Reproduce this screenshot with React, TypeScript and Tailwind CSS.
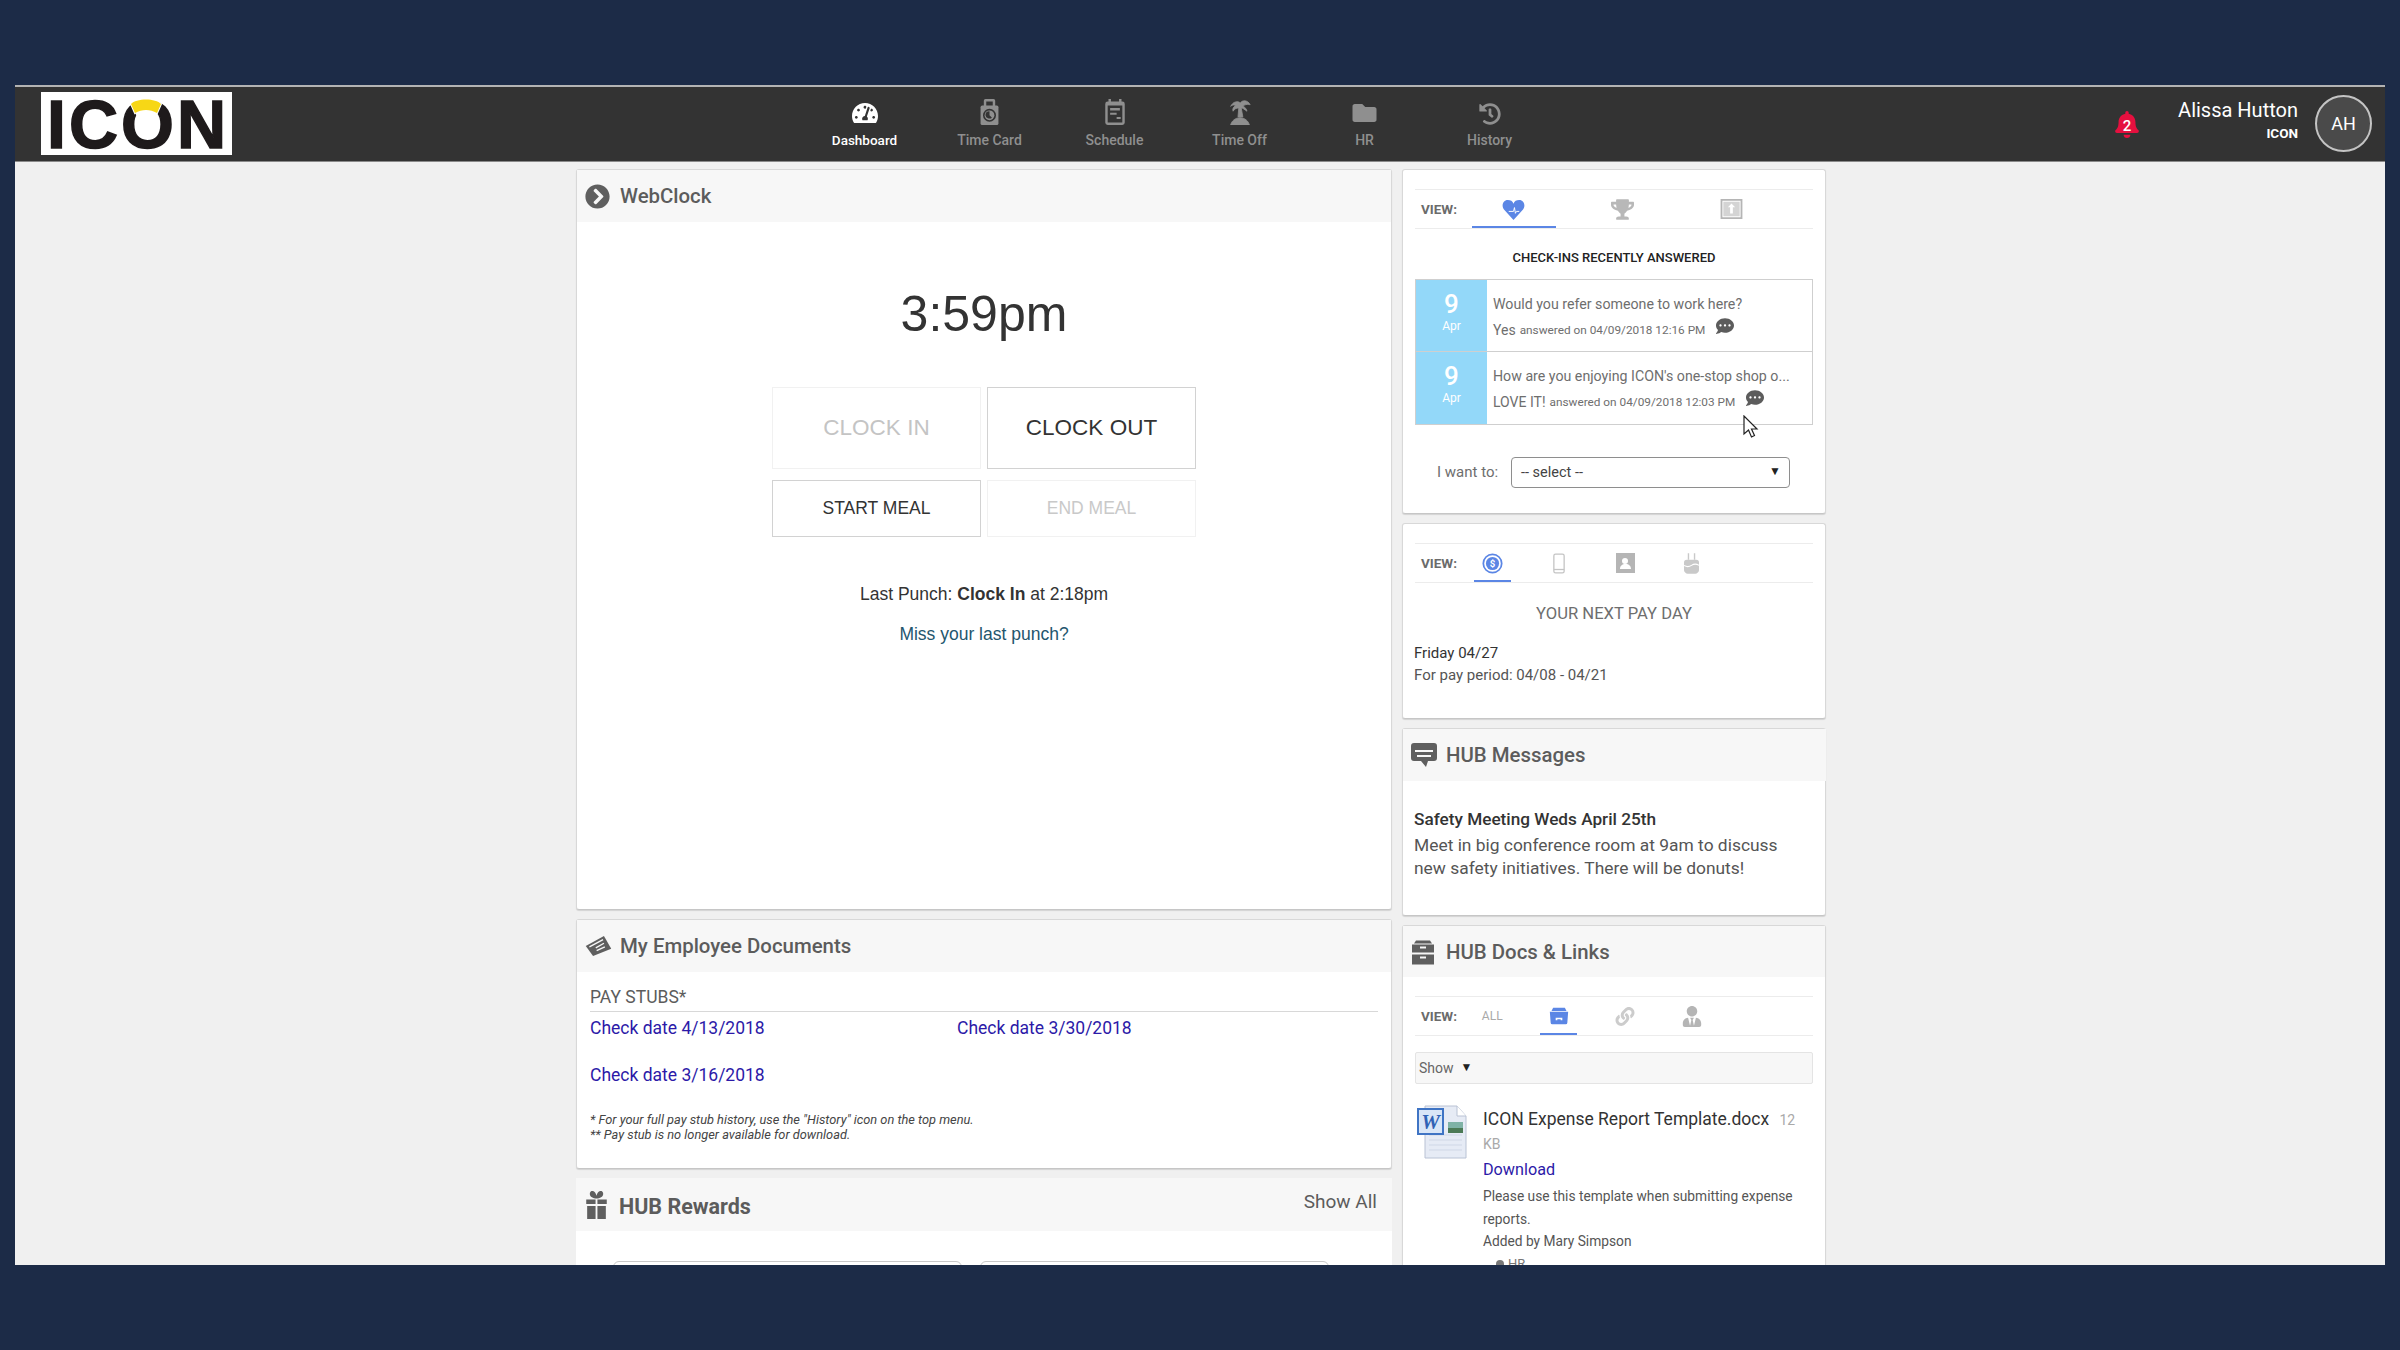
import React from "react";
import {
  FaBell,
  FaChevronCircleRight,
  FaCommentDots,
  FaFolder,
  FaHistory,
  FaLink,
  FaTachometerAlt,
  FaTrophy,
  FaUserTie,
} from "react-icons/fa";

const NavClock = () => (
  <svg viewBox="0 0 24 32" className="h-[26px] w-[21px]" fill="currentColor">
    <path d="M7 0h10a2 2 0 0 1 2 2v7h-3V3H8v6H5V2a2 2 0 0 1 2-2z" />
    <path d="M3 8h18a2 2 0 0 1 2 2v20a2 2 0 0 1-2 2H3a2 2 0 0 1-2-2V10a2 2 0 0 1 2-2z" />
    <circle cx="12" cy="20" r="8" fill="#333333" />
    <circle cx="12" cy="20" r="6" fill="#8f8f8f" />
    <path d="M12 15v5l3 3a5 5 0 0 1-8-3 5 5 0 0 1 5-5z" fill="#333333" />
  </svg>
);

const NavCalendar = () => (
  <svg viewBox="0 0 24 32" className="h-[26px] w-[22px]" fill="currentColor">
    <path fillRule="evenodd" d="M4 0h3v3h10V0h3v3h1a3 3 0 0 1 3 3v23a3 3 0 0 1-3 3H3a3 3 0 0 1-3-3V6a3 3 0 0 1 3-3h1zM3 8v21h18V8zm3 3h12v3H6zm0 6h8v2.500H6zm8 5h5v2.500h-5z" />
  </svg>
);

const NavPalm = () => (
  <svg viewBox="0 0 27 32" className="h-[26px] w-[24px]" fill="currentColor" stroke="currentColor" strokeWidth="1">
    <path d="M2 9C5 3 11 2 14 5c2-4 9-4 12 2-4-1-7 0-9 2 3 1 5 4 5 6-3-2-5-4-7-4l2 11h-6l1-11c-3 0-5 1-7 4-1-2 0-5 3-7-2-1-4-1-6 1z" />
    <path d="M2 32c1-5 6-9 11.500-9S24 27 25 32z" />
  </svg>
);

const DollarCircle = () => (
  <svg viewBox="0 0 24 24" className="h-[21px] w-[21px]">
    <circle cx="12" cy="12" r="10.500" fill="none" stroke="#5b86e5" strokeWidth="2" />
    <circle cx="12" cy="12" r="7.500" fill="#5b86e5" />
    <text x="12" y="16" textAnchor="middle" fontSize="11" fontWeight="700" fill="#fff" fontFamily="Roboto, sans-serif">
      $
    </text>
  </svg>
);

const HeartPulse = () => (
  <svg viewBox="0 0 24 22" className="h-[21px] w-[23px]">
    <path d="M12 22 2 11C-1 7 1 1 6 1c3 0 5 1 6 4 1-3 3-4 6-4 5 0 7 6 4 10z" fill="#5b86e5" />
    <path d="M7 13h5l1-4 1 6 1-2h3" fill="none" stroke="#fff" strokeWidth="1" />
  </svg>
);

const UploadBox = () => (
  <svg viewBox="0 0 24 22" className="h-[20px] w-[23px]">
    <path fillRule="evenodd" d="M0 0h24v22H0zm2 2v18h20V2z" fill="#b5b5b5" />
    <path d="M3 3h18v16H3z" fill="#d4d4d4" />
    <path d="M12 5l4 4h-2.500v7h-3V9H8z" fill="#fff" />
  </svg>
);

const Phone = () => (
  <svg viewBox="0 0 14 24" className="h-[21px] w-[12px]" fill="none" stroke="#c4c4c4" strokeWidth="1.500">
    <rect x="1" y="1" width="12" height="22" rx="2" />
    <path d="M1 19h12" />
  </svg>
);

const Contact = () => (
  <svg viewBox="0 0 20 20" className="h-[20px] w-[20px]">
    <path fillRule="evenodd" d="M1 0h19v20H1zm9 5a3 3 0 1 0 0 6 3 3 0 0 0 0-6zm-5 11h11c0-3-2-5-5.500-5S5 13 5 16z" fill="#b5b5b5" />
  </svg>
);

const Cake = () => (
  <svg viewBox="0 0 16 22" className="h-[21px] w-[15px]" fill="#c9c9c9">
    <path d="M4 0h1.500v7H4zM10.500 0H12v7h-1.500z" />
    <path d="M3 7h10a3 3 0 0 1 3 3v8c0 2-2 4-4 4H4c-2 0-4-2-4-4v-8a3 3 0 0 1 3-3z" />
    <path d="M0 13c3 2 5 2 8 0s5-2 8 0" fill="none" stroke="#fff" strokeWidth="1.200" />
  </svg>
);

const GiftIcon = () => (
  <svg viewBox="0 0 22 30" className="ml-[2px] h-[28px] w-[21px]" fill="#5f5f5f">
    <path d="M11 8C7 8 3 6 4 2s6-2 7 3c1-5 6-7 7-3s-3 6-7 6z" />
    <path d="M0 9h10v5H0zM12 9h10v5H12zM1 16h9v14H1zM12 16h9v14h-9z" />
  </svg>
);

const Drawer = ({ color, className }: { color: string; className: string }) => (
  <svg viewBox="0 0 24 24" className={className} fill={color}>
    <path d="M5 0h14l2 3H3z" />
    <path fillRule="evenodd" d="M1 4h22v8H1zm8 2v2h6V6zM1 14h22v10H1zm8 2v2h6v-2z" />
  </svg>
);

const TabFolder = () => (
  <svg viewBox="0 0 24 20" className="h-[18px] w-[20px]" fill="#5b86e5">
    <path d="M5 0h14l2 4H3z" />
    <path fillRule="evenodd" d="M1 5h22l-1 13a2 2 0 0 1-2 2H4a2 2 0 0 1-2-2zm7 7v3h2v-1h4v1h2v-3z" />
  </svg>
);

const MessageIcon = () => (
  <svg viewBox="0 0 26 24" className="h-[24px] w-[26px]">
    <path d="M3 0h20a3 3 0 0 1 3 3v12a3 3 0 0 1-3 3H17l-2 6-5-6H3a3 3 0 0 1-3-3V3a3 3 0 0 1 3-3z" fill="#5f5f5f" />
    <path d="M4 7h18v2H4zM6 12h14v2H6z" fill="#f7f7f7" />
  </svg>
);

const CheckIcon = () => (
  <svg viewBox="0 0 28 22" className="h-[20px] w-[27px]">
    <path d="M0 11 20 0l8 14-20 8z" fill="#5f5f5f" />
    <path d="M4 12 19 4M11 13l9-5M12 16l9-4" stroke="#f7f7f7" strokeWidth="1.500" />
  </svg>
);

const WordFile = () => (
  <svg viewBox="0 0 50 54" className="h-[54px] w-[50px]">
    <path d="M8 1h32l9 10v42H8z" fill="#e6ebf5" stroke="#b9c2d4" />
    <path d="M40 1v10h9" fill="#fff" stroke="#b9c2d4" />
    <path d="M12 30h33M12 35h33M12 40h33M12 45h33" stroke="#cfd7e6" />
    <rect x="1" y="4" width="25" height="25" fill="#d9e6f7" stroke="#3f74c4" strokeWidth="2" />
    <text x="13.500" y="24" textAnchor="middle" fontFamily="'Liberation Serif', serif" fontWeight="700" fontStyle="italic" fontSize="21" fill="#2f62b5">
      W
    </text>
    <rect x="31" y="17" width="15" height="11" fill="#7fb2a6" />
    <rect x="31" y="23" width="15" height="5" fill="#4c7a56" />
  </svg>
);

const Cursor = () => (
  <svg viewBox="0 0 16 24" className="absolute left-[327px] top-[135px] h-[24px] w-[16px]">
    <path d="M1 1v18l4.500-4 3 7 3-1.500-3-6.500H14z" fill="#fff" stroke="#222" strokeWidth="1.200" />
  </svg>
);

// cap and notch that sit over the O of the logo
const LogoCap = () => (
  <svg viewBox="0 0 40 26" className="absolute left-[85px] top-[4px] h-[26px] w-[40px]">
    <path d="M8 15h24l-6 11H14z" fill="#fff" />
    <path
      d="M5 8C10 2 30 2 35 8l-4 9c-7-4-15-4-22 0z"
      fill="#f7d716"
      stroke="#fff"
      strokeWidth="2"
      paintOrder="stroke"
    />
  </svg>
);

const navItems = [
  { label: "Dashboard", icon: <FaTachometerAlt className="h-[24px] w-[26px]" />, active: true },
  { label: "Time Card", icon: <NavClock /> },
  { label: "Schedule", icon: <NavCalendar /> },
  { label: "Time Off", icon: <NavPalm /> },
  { label: "HR", icon: <FaFolder className="h-[24px] w-[25px]" /> },
  { label: "History", icon: <FaHistory className="h-[22px] w-[24px]" /> },
];

const Card = ({ className = "", children }: { className?: string; children: React.ReactNode }) => (
  <div className={`rounded-[3px] border border-[#d8d8d8] border-b-[#c6c6c6] bg-white shadow-[0_1px_1px_rgba(0,0,0,0.12)] ${className}`}>
    {children}
  </div>
);

const CardHead = ({
  icon,
  title,
  className = "h-[52px]",
  titleClass = "text-[20.400px] font-medium",
  right,
}: {
  icon: React.ReactNode;
  title: string;
  className?: string;
  titleClass?: string;
  right?: React.ReactNode;
}) => (
  <div className={`flex items-center bg-[#f7f7f7] pl-[8px] text-[#5c5c5c] ${className}`}>
    <div className="flex w-[35px] justify-start">{icon}</div>
    <h2 className={titleClass}>{title}</h2>
    {right}
  </div>
);

const ViewTabs = ({
  cell,
  underline,
  active,
  tabs,
}: {
  cell: string;
  underline: string;
  active: number;
  tabs: React.ReactNode[];
}) => (
  <div className="flex h-[40px] border-y border-[#ececec]">
    <div className="w-[44px] pl-[6px] text-[13.500px] font-bold leading-[38px] text-[#6b6b6b]">VIEW:</div>
    {tabs.map((tab, i) => (
      <div key={i} className={`relative flex items-center justify-center ${cell}`}>
        {tab}
        {i === active && <div className={`absolute bottom-[0px] h-[2px] bg-[#5b86e5] ${underline}`} />}
      </div>
    ))}
  </div>
);

const CheckIn = ({ question, answer, when, bordered }: { question: string; answer: string; when: string; bordered?: boolean }) => (
  <div className={`flex h-[72px] ${bordered ? "border-b border-[#cfcfcf]" : ""}`}>
    <div className="flex w-[71px] flex-col items-center bg-[#93d8f9] pt-[10px] text-white">
      <div className="text-[26px] font-medium leading-[28px]">9</div>
      <div className="text-[12px] leading-[16px]">Apr</div>
    </div>
    <div className="pl-[6px] pt-[15px] text-[#6e6e6e]">
      <div className="whitespace-nowrap text-[14.200px] leading-[18px]">{question}</div>
      <div className="mt-[8px] flex items-center text-[14px] leading-[18px]">
        {answer}
        <span className="ml-[4px] text-[11.800px]">answered on {when}</span>
        <FaCommentDots className="ml-[10px] -mt-[8px] h-[18px] w-[20px] text-[#5c5c5c]" />
      </div>
    </div>
  </div>
);

export default function App() {
  return (
    <div className="h-[1350px] overflow-hidden bg-[#1c2b47] px-[15px] pt-[85px] font-['Roboto',sans-serif]">
      <div className="flex h-[1180px] flex-col overflow-hidden bg-[#f0f0f0]">
        {/* top bar */}
        <header className="flex h-[77px] shrink-0 items-start border-y border-t-2 border-t-[#b3b3b3] border-b-[#8a8a8a] bg-[#333333]">
          <div className="relative ml-[26px] mt-[5px] flex h-[63px] w-[191px] shrink-0 items-center justify-center bg-white">
            <div className="pl-[3px] font-['Liberation_Sans',sans-serif] text-[68px] font-bold leading-none tracking-[3px] text-[#1e1a1b] [-webkit-text-stroke:1.500px_#1e1a1b]">
              ICON
            </div>
            <LogoCap />
          </div>
          <nav className="ml-[570px] flex">
            {navItems.map((item) => (
              <div
                key={item.label}
                className={`flex w-[125px] flex-col items-center ${item.active ? "text-white" : "text-[#8f8f8f]"}`}
              >
                <div className="flex h-[40px] items-end justify-center pb-[2px]">{item.icon}</div>
                <div className={`mt-[3px] font-medium ${item.active ? "text-[13.500px] text-white" : "text-[14px]"}`}>{item.label}</div>
              </div>
            ))}
          </nav>
          <div className="ml-auto flex items-center pr-[13px] pt-[8px]">
            <div className="relative mb-[2px] mr-[38px] mt-[4px] flex h-[28px] w-[26px] items-center justify-center">
              <FaBell className="h-[27px] w-[26px] text-[#e5103f]" />
              <span className="absolute top-[4px] text-[15px] font-medium text-white">2</span>
            </div>
            <div className="mb-[8px] mr-[17px] text-right text-white">
              <div className="text-[20px] leading-[26px]">Alissa Hutton</div>
              <div className="mt-[2px] text-[13.500px] font-bold leading-[17px]">ICON</div>
            </div>
            <div className="flex h-[57px] w-[57px] items-center justify-center rounded-full border-2 border-[#c4c4c4] bg-[#4a4a4a] text-[18px] text-white">
              AH
            </div>
          </div>
        </header>

        <main className="flex flex-1 items-start justify-center gap-[10px] pl-[2px] pt-[7px]">
          {/* left column */}
          <div className="flex w-[816px] shrink-0 flex-col gap-[9px]">
            <Card className="h-[741px]">
              <CardHead
                icon={<FaChevronCircleRight className="h-[25px] w-[25px] text-[#5f5f5f]" />}
                title="WebClock"
              />
              <div className="flex flex-col items-center pt-[62px] font-['Liberation_Sans',sans-serif]">
                <div className="text-[50px] leading-[60px] text-[#333333]">3:59pm</div>
                <div className="mt-[43px] grid grid-cols-[209px_209px] gap-x-[6px] gap-y-[11px]">
                  <div className="flex h-[82px] items-center justify-center border border-[#f1f1f1] text-[22.500px] text-[#c4c4c4]">CLOCK IN</div>
                  <div className="flex h-[82px] items-center justify-center border border-[#d2d2d2] text-[22.500px] text-[#333333]">CLOCK OUT</div>
                  <div className="flex h-[57px] items-center justify-center border border-[#d2d2d2] text-[17.500px] text-[#333333]">START MEAL</div>
                  <div className="flex h-[57px] items-center justify-center border border-[#f1f1f1] text-[17.500px] text-[#c9c9c9]">END MEAL</div>
                </div>
                <div className="mt-[46px] text-[17.500px] leading-[22px] text-[#333333]">
                  Last Punch: <b>Clock In</b> at 2:18pm
                </div>
                <a className="mt-[18px] text-[17.500px] leading-[22px] text-[#23566e]">Miss your last punch?</a>
              </div>
            </Card>

            <Card className="h-[250px]">
              <CardHead icon={<CheckIcon />} title="My Employee Documents" />
              <div className="px-[13px] pt-[14px]">
                <div className="border-b border-[#d8d8d8] pb-[3px] text-[17.500px] leading-[22px] text-[#5c5c5c]">PAY STUBS*</div>
                <div className="grid grid-cols-[367px_1fr] gap-y-[25px] pt-[5px] text-[17.500px] leading-[22px] text-[#2c1aa8]">
                  <a>Check date 4/13/2018</a>
                  <a>Check date 3/30/2018</a>
                  <a>Check date 3/16/2018</a>
                </div>
                <div className="mt-[26px] text-[12.800px] italic leading-[15px] text-[#444444]">
                  * For your full pay stub history, use the "History" icon on the top menu.
                  <br />
                  ** Pay stub is no longer available for download.
                </div>
              </div>
            </Card>

            <div className="h-[120px] rounded-t-[3px] bg-white">
              <CardHead
                icon={<GiftIcon />}
                title="HUB Rewards"
                className="h-[53px]"
                titleClass="text-[21.500px] font-bold mt-[5px]"
                right={<span className="ml-auto mb-[4px] pr-[15px] text-[19px] text-[#5c5c5c]">Show All</span>}
              />
              <div className="flex gap-[18px] pl-[37px] pt-[30px]">
                <div className="h-[30px] w-[349px] rounded-t-[6px] border border-[#c8c8c8]" />
                <div className="h-[30px] w-[349px] rounded-t-[6px] border border-[#c8c8c8]" />
              </div>
            </div>
          </div>

          {/* right column */}
          <div className="flex w-[424px] shrink-0 flex-col gap-[9px]">
            <Card className="h-[345px] px-[12px] pt-[19px]">
              <ViewTabs
                cell="w-[109px]"
                underline="w-[84px]"
                active={0}
                tabs={[<HeartPulse />, <FaTrophy className="h-[21px] w-[23px] text-[#b8b8b8]" />, <UploadBox />]}
              />
              <div className="pt-[20px] text-center text-[13px] font-medium leading-[18px] text-[#222222]">CHECK-INS RECENTLY ANSWERED</div>
              <div className="relative mt-[12px] border border-[#cfcfcf]">
                <CheckIn question="Would you refer someone to work here?" answer="Yes" when="04/09/2018 12:16 PM" bordered />
                <CheckIn question="How are you enjoying ICON's one-stop shop o..." answer="LOVE IT!" when="04/09/2018 12:03 PM" />
                <Cursor />
              </div>
              <div className="mt-[32px] flex items-center pl-[22px]">
                <span className="w-[74px] text-[15px] text-[#6e6e6e]">I want to:</span>
                <div className="flex h-[31px] w-[279px] items-center justify-between rounded-[4px] border border-[#8e8e8e] pl-[9px] pr-[8px] text-[14.500px] text-[#444444]">
                  -- select --
                  <span className="mb-[4px] text-[12px] text-[#222222]">▼</span>
                </div>
              </div>
            </Card>

            <Card className="h-[196px] px-[12px] pt-[19px]">
              <ViewTabs
                cell="w-[66.500px]"
                underline="w-[37px]"
                active={0}
                tabs={[<DollarCircle />, <Phone />, <Contact />, <Cake />]}
              />
              <div className="pt-[21px] text-center text-[16.600px] leading-[20px] text-[#6e6e6e]">YOUR NEXT PAY DAY</div>
              <div className="-ml-[1px] mt-[18px] text-[15px] leading-[22px] text-[#333333]">
                Friday 04/27
                <br />
                <span className="text-[#555555]">For pay period: 04/08 - 04/21</span>
              </div>
            </Card>

            <Card className="h-[188px]">
              <CardHead icon={<MessageIcon />} title="HUB Messages" className="h-[52px] -mr-[1px]" />
              <div className="px-[11px] pt-[27px] text-[#555555]">
                <div className="text-[17.200px] font-medium leading-[23px] text-[#333333]">Safety Meeting Weds April 25th</div>
                <div className="mt-[3px] text-[17.400px] leading-[23px]">
                  Meet in big conference room at 9am to discuss
                  <br />
                  new safety initiatives. There will be donuts!
                </div>
              </div>
            </Card>

            <Card className="h-[400px]">
              <CardHead icon={<Drawer color="#5f5f5f" className="h-[25px] w-[24px]" />} title="HUB Docs & Links" className="h-[51px] pt-[2px]" />
              <div className="px-[12px] pt-[19px]">
                <ViewTabs
                  cell="w-[66.500px]"
                  underline="w-[37px]"
                  active={1}
                  tabs={[
                    <span className="text-[12px] text-[#a9a9a9]">ALL</span>,
                    <TabFolder />,
                    <FaLink className="h-[19px] w-[20px] text-[#cccccc]" />,
                    <FaUserTie className="h-[21px] w-[20px] text-[#b5b5b5]" />,
                  ]}
                />
                <div className="mt-[16px] flex h-[32px] items-center rounded-[2px] border border-[#e4e4e4] bg-[#f7f7f7] pl-[3px] text-[14px] text-[#666666]">
                  Show
                  <span className="ml-[7px] mb-[3px] text-[12px] text-[#222222]">▼</span>
                </div>
                <div className="mt-[21px] flex">
                  <div className="ml-[2px] w-[66px] shrink-0">
                    <WordFile />
                  </div>
                  <div className="w-[330px]">
                    <div className="mt-[3px] text-[17.500px] leading-[23px] text-[#333333]">
                      ICON Expense Report Template.docx <span className="ml-[6px] text-[14px] text-[#a9a9a9]">12</span>
                    </div>
                    <div className="text-[14px] leading-[24px] text-[#a9a9a9]">KB</div>
                    <a className="mt-[1px] block text-[16.200px] leading-[26px] text-[#2c1aa8]">Download</a>
                    <div className="mt-[2px] text-[13.750px] leading-[22.500px] text-[#555555]">
                      Please use this template when submitting expense
                      <br />
                      reports.
                      <br />
                      Added by Mary Simpson
                    </div>
                    <div className="flex items-center pl-[13px] text-[13px] leading-[22px] text-[#777777]">
                      <span className="mr-[4px] h-[8px] w-[8px] rounded-full bg-[#777777]" />
                      HR
                    </div>
                  </div>
                </div>
              </div>
            </Card>
          </div>
        </main>
      </div>
    </div>
  );
}
